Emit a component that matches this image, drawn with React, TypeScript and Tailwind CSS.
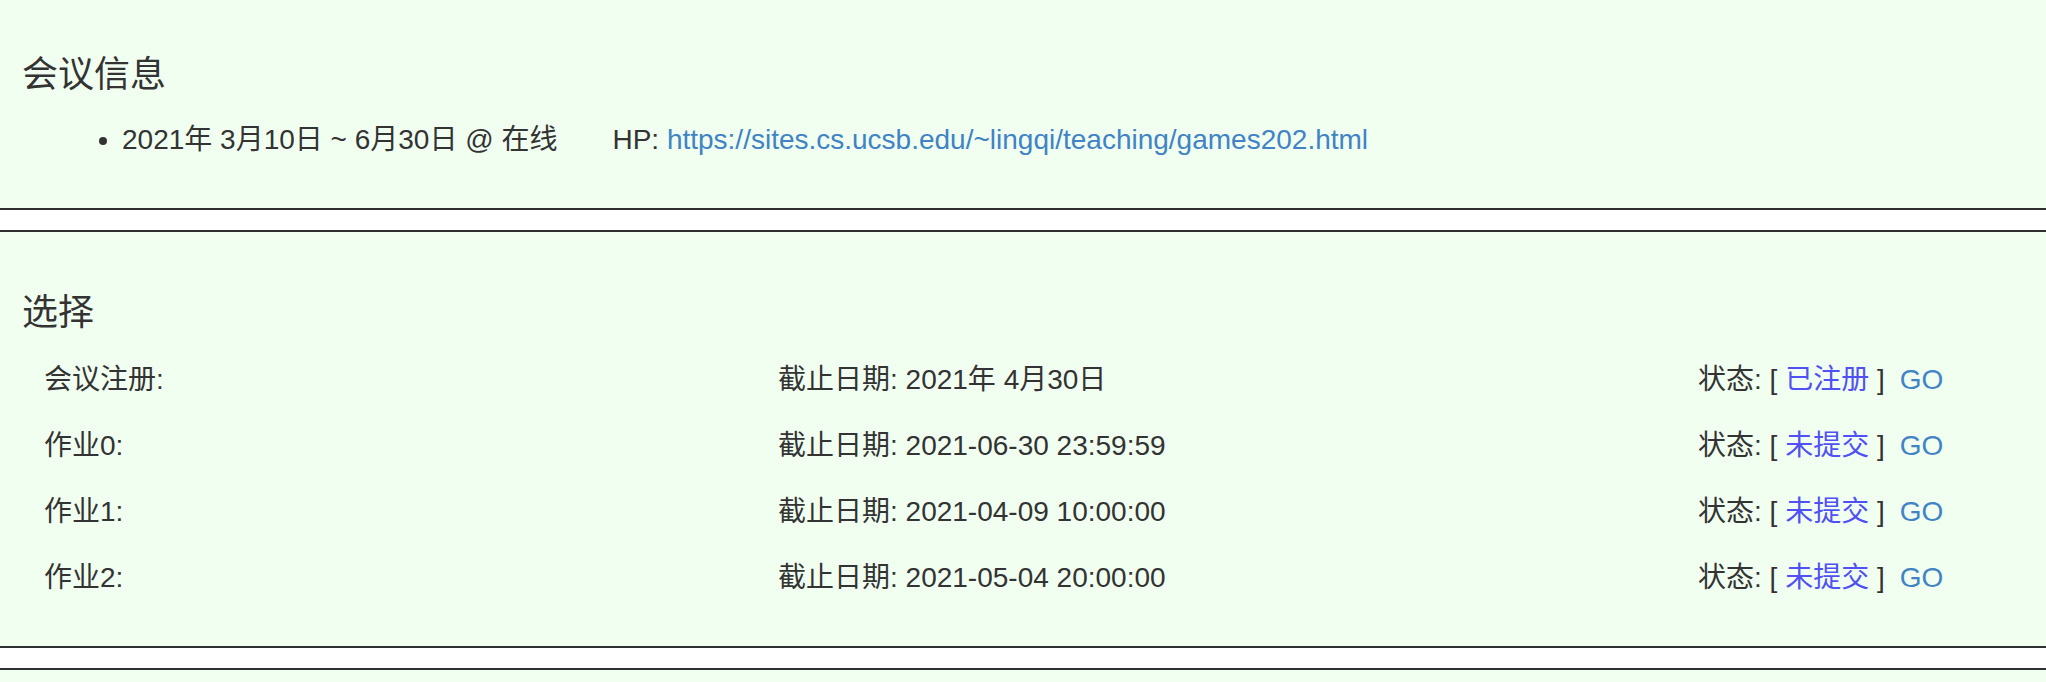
const rows = [
  { name: "会议注册:", deadline: "截止日期: 2021年 4月30日", status: "已注册" },
  { name: "作业0:", deadline: "截止日期: 2021-06-30 23:59:59", status: "未提交" },
  { name: "作业1:", deadline: "截止日期: 2021-04-09 10:00:00", status: "未提交" },
  { name: "作业2:", deadline: "截止日期: 2021-05-04 20:00:00", status: "未提交" },
];

function Section({ first, children }: { first?: boolean; children: React.ReactNode }) {
  return (
    <section
      className={
        first
          ? "border-b-2 border-[#2f2f2f] bg-[#f0fff0] px-[22px] pt-[53px] pb-[35px]"
          : "mt-5 border-y-2 border-[#2f2f2f] bg-[#f0fff0] px-[22px] pt-[59px] pb-[35px]"
      }
    >
      {children}
    </section>
  );
}

export default function App() {
  return (
    <div
      className="min-h-screen bg-white text-[28px] text-[#333]"
      style={{ fontFamily: '"Liberation Sans", "Noto Sans CJK SC", sans-serif' }}
    >
      <Section first>
        <h3 className="text-[36px] leading-[44px] font-normal">会议信息</h3>
        <ul className="mt-[10px] list-disc pl-[100px]">
          <li className="h-[66px] leading-[66px]">
            2021年 3月10日 ~ 6月30日 @ 在线
            <span className="ml-[55px]">
              HP:{" "}
              <a href="#" className="text-[#4183c4]">
                https://sites.cs.ucsb.edu/~lingqi/teaching/games202.html
              </a>
            </span>
          </li>
        </ul>
      </Section>

      <Section>
        <h3 className="text-[36px] leading-[44px] font-normal">选择</h3>
        <div className="mt-[12px] pl-[22px]">
          {rows.map((r) => (
            <div key={r.name} className="grid h-[66px] grid-cols-[734px_920px_1fr] items-center">
              <div>{r.name}</div>
              <div>{r.deadline}</div>
              <div className="whitespace-nowrap">
                状态: [ <span className="text-[#5050f5]">{r.status}</span> ]
                <a href="#" className="ml-[15px] text-[#4183c4]">
                  GO
                </a>
              </div>
            </div>
          ))}
        </div>
      </Section>

      <section className="mt-5 h-[120px] border-t-2 border-[#2f2f2f] bg-[#f0fff0]" />
    </div>
  );
}
